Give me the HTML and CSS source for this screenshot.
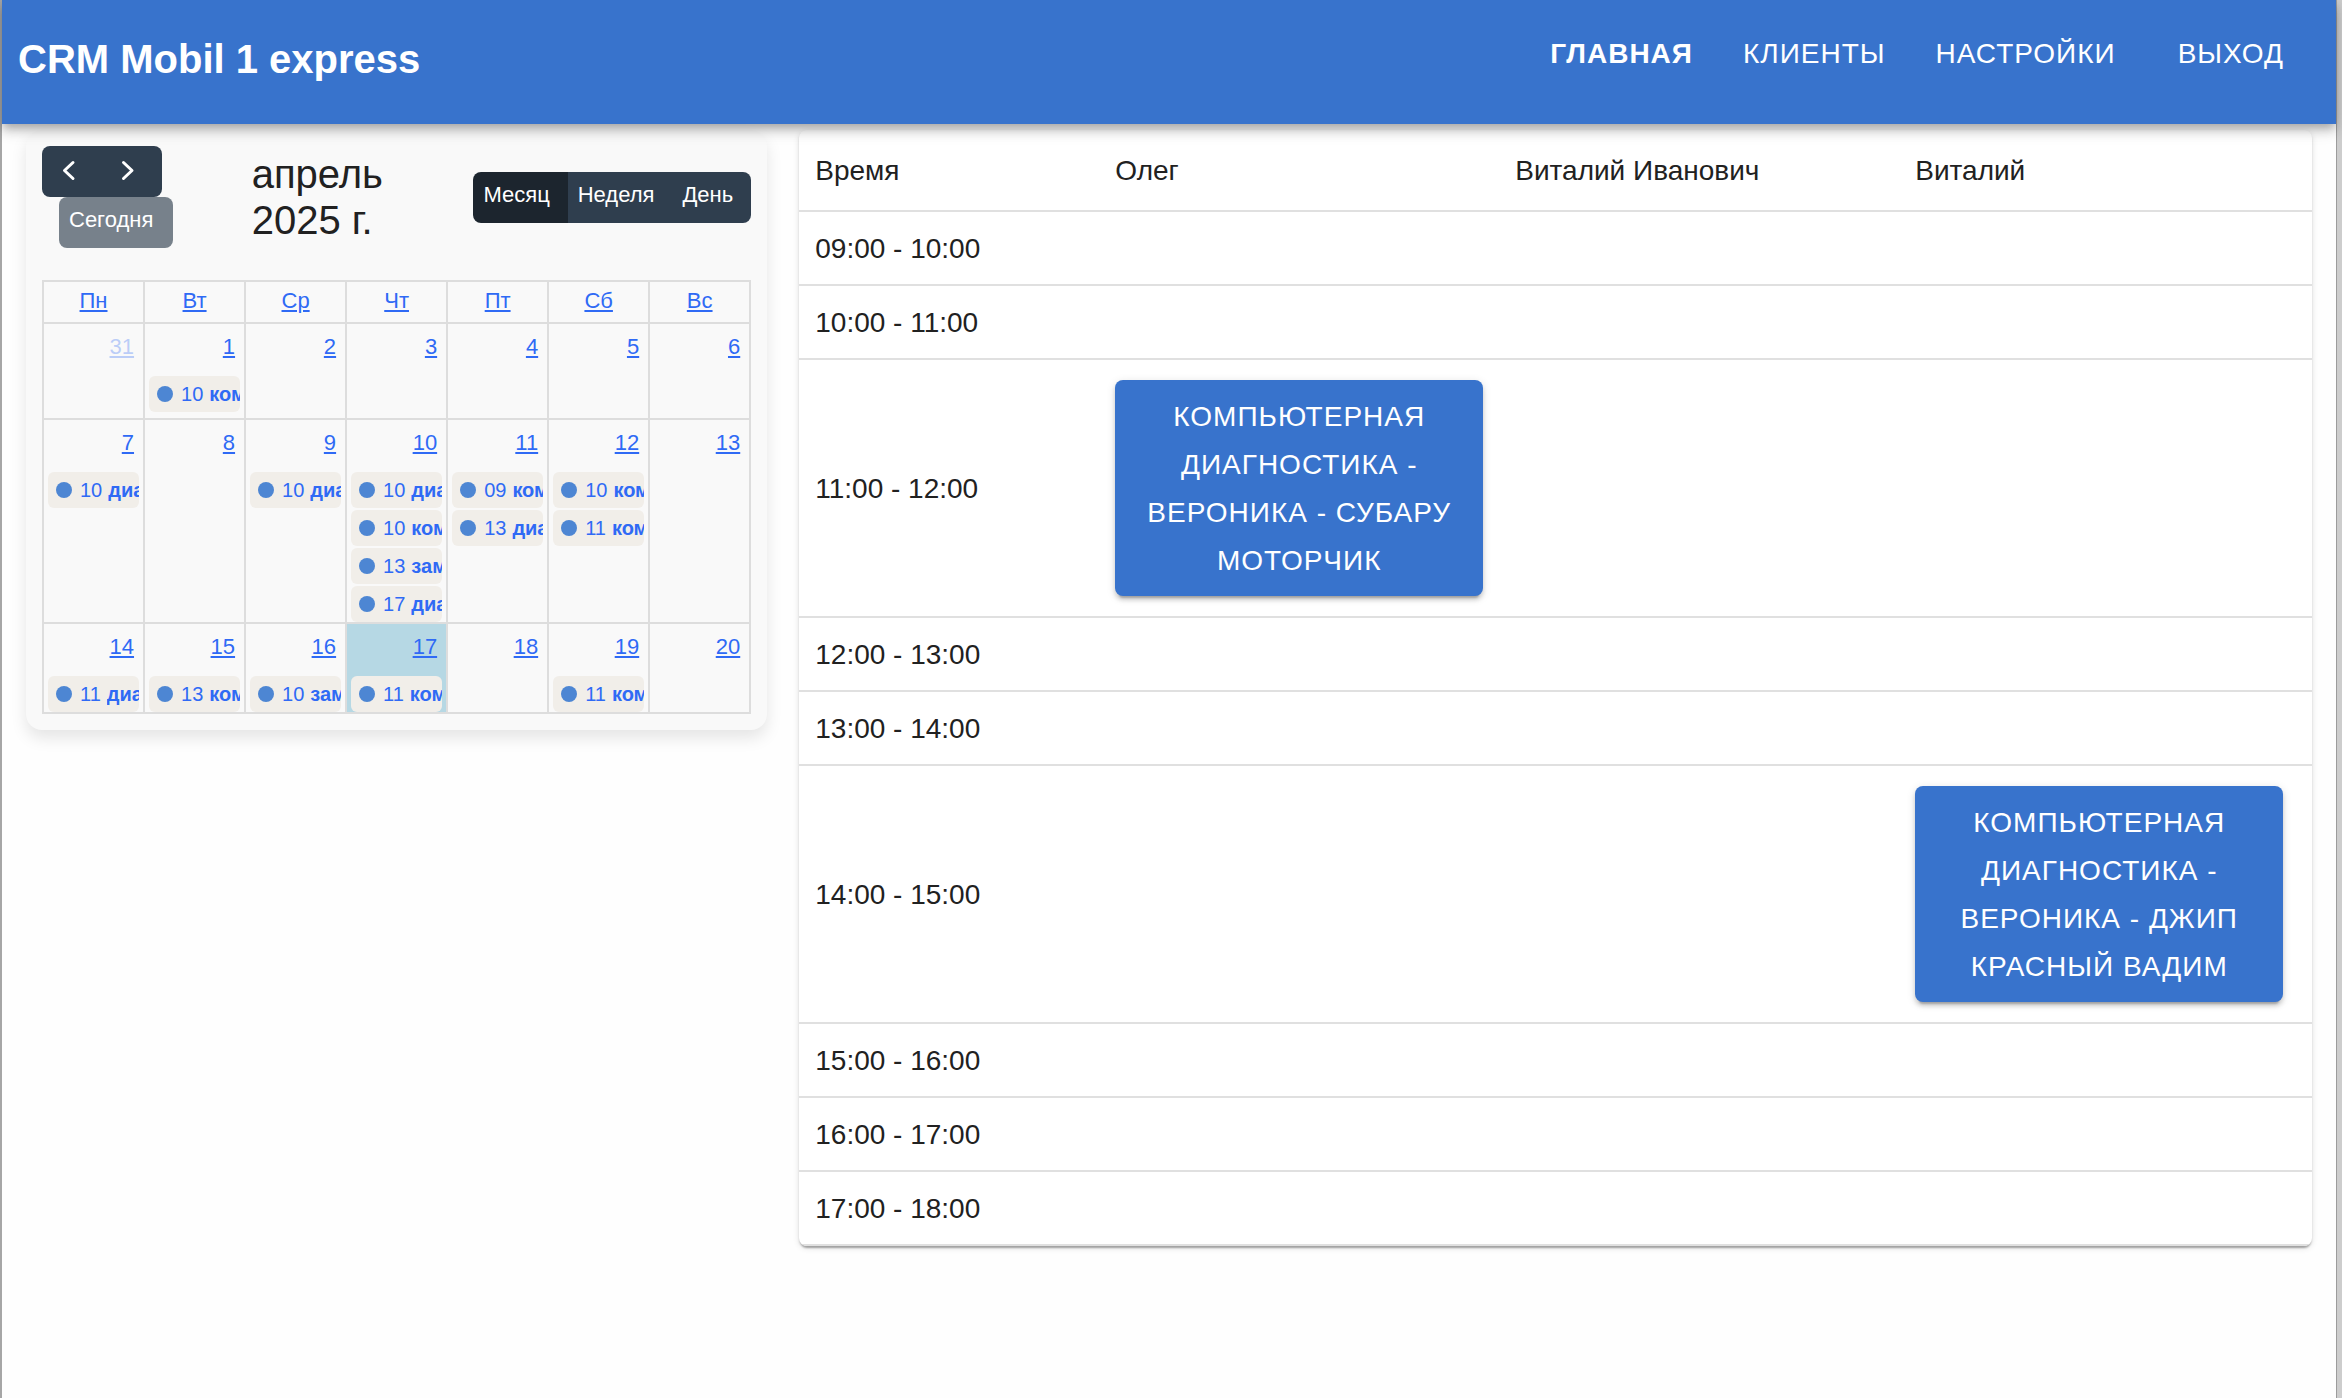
FILE: index.html
```html
<!DOCTYPE html>
<html lang="ru">
<head>
<meta charset="utf-8">
<meta name="viewport" content="width=device-width, initial-scale=1">
<title>CRM Mobil 1 express</title>
<link rel="stylesheet" href="styles.css">
</head>
<body>
<div class="app">
  <header class="topbar">
    <h1 class="brand">CRM Mobil 1 express</h1>
    <nav class="nav">
      <a class="nav-link nav-link-active" href="#">Главная</a>
      <a class="nav-link" href="#">Клиенты</a>
      <a class="nav-link" href="#">Настройки</a>
      <button class="nav-logout" type="button">Выход</button>
    </nav>
  </header>

  <main class="content">
    <section class="calendar">
      <div class="toolbar">
        <div class="toolbar-nav">
          <div class="button-group">
            <button class="cal-button" type="button" aria-label="Назад"><svg class="chevron" viewBox="0 0 32 31"><path d="M21 9.500 12.500 17.500l8.500 8"/></svg></button>
            <button class="cal-button" type="button" aria-label="Вперёд"><svg class="chevron" viewBox="0 0 32 31"><path d="M11.500 9.500l8.500 8-8.500 8"/></svg></button>
          </div>
          <button class="cal-button cal-button-today" type="button" disabled>Сегодня</button>
        </div>
        <h2 class="month">апрель 2025&nbsp;г.</h2>
        <div class="button-group">
          <button class="cal-button cal-button-active" type="button">Месяц</button>
          <button class="cal-button" type="button">Неделя</button>
          <button class="cal-button" type="button">День</button>
        </div>
      </div>
      <table class="month-grid">
        <thead>
          <tr>
            <th><a href="#">Пн</a></th><th><a href="#">Вт</a></th><th><a href="#">Ср</a></th><th><a href="#">Чт</a></th><th><a href="#">Пт</a></th><th><a href="#">Сб</a></th><th><a href="#">Вс</a></th>
          </tr>
        </thead>
        <tbody>
          <tr>
            <td><a class="day day-other" href="#">31</a></td>
            <td><a class="day" href="#">1</a>
              <div class="events"><a class="event" href="#"><i class="dot"></i><span>10</span><b>компьютерная диагностика</b></a></div></td>
            <td><a class="day" href="#">2</a></td>
            <td><a class="day" href="#">3</a></td>
            <td><a class="day" href="#">4</a></td>
            <td><a class="day" href="#">5</a></td>
            <td><a class="day" href="#">6</a></td>
          </tr>
          <tr>
            <td><a class="day" href="#">7</a>
              <div class="events"><a class="event" href="#"><i class="dot"></i><span>10</span><b>диагностика</b></a></div></td>
            <td><a class="day" href="#">8</a></td>
            <td><a class="day" href="#">9</a>
              <div class="events"><a class="event" href="#"><i class="dot"></i><span>10</span><b>диагностика</b></a></div></td>
            <td><a class="day" href="#">10</a>
              <div class="events">
                <a class="event" href="#"><i class="dot"></i><span>10</span><b>диагностика</b></a>
                <a class="event" href="#"><i class="dot"></i><span>10</span><b>компьютерная диагностика</b></a>
                <a class="event" href="#"><i class="dot"></i><span>13</span><b>замена масла</b></a>
                <a class="event" href="#"><i class="dot"></i><span>17</span><b>диагностика</b></a>
              </div></td>
            <td><a class="day" href="#">11</a>
              <div class="events">
                <a class="event" href="#"><i class="dot"></i><span>09</span><b>компьютерная диагностика</b></a>
                <a class="event" href="#"><i class="dot"></i><span>13</span><b>диагностика</b></a>
              </div></td>
            <td><a class="day" href="#">12</a>
              <div class="events">
                <a class="event" href="#"><i class="dot"></i><span>10</span><b>компьютерная диагностика</b></a>
                <a class="event" href="#"><i class="dot"></i><span>11</span><b>компьютерная диагностика</b></a>
              </div></td>
            <td><a class="day" href="#">13</a></td>
          </tr>
          <tr>
            <td><a class="day" href="#">14</a>
              <div class="events"><a class="event" href="#"><i class="dot"></i><span>11</span><b>диагностика</b></a></div></td>
            <td><a class="day" href="#">15</a>
              <div class="events"><a class="event" href="#"><i class="dot"></i><span>13</span><b>компьютерная диагностика</b></a></div></td>
            <td><a class="day" href="#">16</a>
              <div class="events"><a class="event" href="#"><i class="dot"></i><span>10</span><b>замена масла</b></a></div></td>
            <td class="today"><a class="day" href="#">17</a>
              <div class="events"><a class="event" href="#"><i class="dot"></i><span>11</span><b>компьютерная диагностика</b></a></div></td>
            <td><a class="day" href="#">18</a></td>
            <td><a class="day" href="#">19</a>
              <div class="events"><a class="event" href="#"><i class="dot"></i><span>11</span><b>компьютерная диагностика</b></a></div></td>
            <td><a class="day" href="#">20</a></td>
          </tr>
        </tbody>
      </table>
    </section>

    <section class="schedule">
      <table class="schedule-table">
        <colgroup><col class="col-time"><col class="col-worker"><col class="col-worker"><col class="col-last"></colgroup>
        <thead>
          <tr><th>Время</th><th>Олег</th><th>Виталий Иванович</th><th>Виталий</th></tr>
        </thead>
        <tbody>
          <tr><td>09:00 - 10:00</td><td></td><td></td><td></td></tr>
          <tr><td>10:00 - 11:00</td><td></td><td></td><td></td></tr>
          <tr><td>11:00 - 12:00</td><td><button class="booking" type="button">компьютерная диагностика - Вероника - субару моторчик</button></td><td></td><td></td></tr>
          <tr><td>12:00 - 13:00</td><td></td><td></td><td></td></tr>
          <tr><td>13:00 - 14:00</td><td></td><td></td><td></td></tr>
          <tr><td>14:00 - 15:00</td><td></td><td></td><td><button class="booking" type="button">компьютерная диагностика - Вероника - джип красный Вадим</button></td></tr>
          <tr><td>15:00 - 16:00</td><td></td><td></td><td></td></tr>
          <tr><td>16:00 - 17:00</td><td></td><td></td><td></td></tr>
          <tr><td>17:00 - 18:00</td><td></td><td></td><td></td></tr>
        </tbody>
      </table>
    </section>
  </main>
</div>
</body>
</html>
```
FILE: styles.css
```css
* {
  box-sizing: border-box;
}

body {
  margin: 0;
  background: #cdcdcd;
  color: #212121;
  font-family: "Liberation Sans", Arial, sans-serif;
  font-size: 28px;
}

button {
  margin: 0;
  border: 0;
  font: inherit;
  color: inherit;
  cursor: pointer;
}

table {
  width: 100%;
  table-layout: fixed;
}

/* Window frame */
.app {
  min-height: 100vh;
  margin-right: 5px;
  border-left: 2px solid #a6a6a6;
  border-right: 1px solid #9c9c9c;
  background: #fefefe;
}

/* Top bar */
.topbar {
  position: relative;
  z-index: 1;
  display: flex;
  justify-content: space-between;
  align-items: flex-start;
  min-height: 124px;
  padding: 28px 36px 28px 16px;
  background: #3873cc;
  color: #fff;
  box-shadow:
    0 4px 8px -2px rgba(0, 0, 0, 0.2),
    0 8px 10px rgba(0, 0, 0, 0.14),
    0 2px 20px rgba(0, 0, 0, 0.12);
}

.brand {
  margin: 0;
  font-size: 40px;
  font-weight: 700;
  line-height: 62px;
}

.nav {
  display: flex;
  gap: 50px;
  line-height: 52px;
  letter-spacing: 1px;
  text-transform: uppercase;
}

.nav-link {
  color: inherit;
  text-decoration: none;
}

.nav-link-active {
  font-weight: 700;
}

.nav-logout {
  padding: 0 16px 0 12px;
  background: none;
  letter-spacing: inherit;
  text-transform: inherit;
}

/* Page columns */
.content {
  display: grid;
  grid-template-columns: minmax(0, 49fr) minmax(0, 100fr);
  gap: 32px;
  align-items: start;
  padding: 6px 24px 24px;
}

/* Calendar */
.calendar {
  padding: 16px;
  border-radius: 16px;
  background: #f9f9f9;
  box-shadow: 0 8px 16px rgba(0, 0, 0, 0.1);
}

.toolbar {
  display: flex;
  justify-content: space-between;
  align-items: center;
  margin-bottom: 32px;
}

.toolbar-nav {
  display: flex;
  flex-direction: column;
  align-items: flex-start;
  width: 132px;
}

.button-group {
  display: flex;
  border-radius: 8px;
  overflow: hidden;
}

.cal-button {
  padding: 7px 18px 13px 10px;
  background: #2f3e4e;
  color: #fff;
  font-size: 22px;
  line-height: 31px;
}

.cal-button-active {
  background: #1c252e;
}

.cal-button-today {
  margin-left: 17px;
  padding-right: 20px;
  border-radius: 8px;
  background: #77818b;
}

.chevron {
  display: block;
  width: 32px;
  height: 31px;
  fill: none;
  stroke: #fff;
  stroke-width: 3;
  stroke-linecap: round;
  stroke-linejoin: round;
}

.month {
  width: 144px;
  margin: 0;
  font-size: 40px;
  font-weight: 400;
  line-height: 46px;
}

.month-grid {
  border-collapse: collapse;
  font-size: 22px;
  line-height: 36px;
}

.month-grid th,
.month-grid td {
  padding: 0;
  border: 2px solid #ddd;
  vertical-align: top;
}

.month-grid th {
  height: 42px;
  padding-top: 1px;
  font-weight: 400;
}

.month-grid td {
  height: 90px;
}

.month-grid tr:first-child td {
  height: 96px;
}

.month-grid a {
  color: #2f6af5;
  text-decoration-thickness: 2px;
  text-underline-offset: 2px;
}

.day {
  display: block;
  padding: 5px 9px 3px;
  text-align: right;
}

.day-other {
  opacity: 0.3;
}

.today {
  background: #b6d8e4;
}

.events {
  display: flex;
  flex-direction: column;
  gap: 2px;
  padding: 8px 4px 0;
}

.month-grid .event {
  display: flex;
  align-items: center;
  gap: 8px;
  padding-left: 8px;
  border-radius: 6px;
  background: #f1eee9;
  font-size: 20px;
  text-decoration: none;
  white-space: nowrap;
  overflow: hidden;
}

.event b {
  flex: 1;
  min-width: 0;
  margin-left: -2px;
  overflow: hidden;
}

.dot {
  flex: none;
  width: 16px;
  height: 16px;
  border-radius: 50%;
  background: #4d86d3;
}

/* Daily schedule */
.schedule {
  border-radius: 8px;
  background: #fff;
  overflow: hidden;
  box-shadow:
    0 4px 2px -2px rgba(0, 0, 0, 0.2),
    0 2px 2px rgba(0, 0, 0, 0.14),
    0 2px 6px rgba(0, 0, 0, 0.12);
}

.schedule-table {
  border-spacing: 0;
  line-height: 40px;
}

.schedule-table th,
.schedule-table td {
  padding: 17px 16px 15px;
  border-bottom: 2px solid #e0e0e0;
  text-align: left;
  font-weight: 400;
}

.schedule-table th {
  padding: 21px 16px 19px;
}

.schedule-table td:empty {
  padding: 0;
}

.col-time {
  width: 300px;
}

.col-worker {
  width: 400px;
}

.booking {
  display: block;
  width: 100%;
  max-width: 368px;
  margin: 3px 0 5px;
  padding: 13px 12px 11px;
  border-radius: 8px;
  background: #3873cc;
  color: #fff;
  line-height: 48px;
  letter-spacing: 1px;
  text-transform: uppercase;
  box-shadow:
    0 6px 2px -4px rgba(0, 0, 0, 0.2),
    0 4px 4px rgba(0, 0, 0, 0.14),
    0 2px 10px rgba(0, 0, 0, 0.12);
}
```
